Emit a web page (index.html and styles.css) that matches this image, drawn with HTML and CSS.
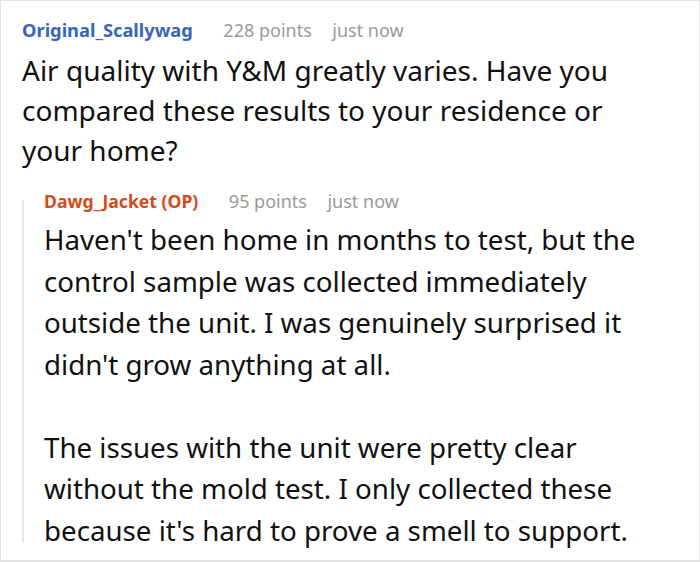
FILE: index.html
```html
<!DOCTYPE html>
<html>
<head>
<meta charset="utf-8">
<link rel="stylesheet" href="styles.css">
</head>
<body>
<div class="thread">
  <div class="comment">
    <div class="meta">
      <span class="author">Original_Scallywag</span>
      <span class="points">228 points</span>
      <span class="time">just now</span>
    </div>
    <p class="body">Air quality with Y&amp;M greatly varies. Have you compared these results to your residence or your home?</p>
    <div class="reply">
      <div class="meta">
        <span class="author op">Dawg_Jacket (OP)</span>
        <span class="points">95 points</span>
        <span class="time">just now</span>
      </div>
      <p class="body reply-body">Haven't been home in months to test, but the control sample was collected immediately outside the unit. I was genuinely surprised it didn't grow anything at all.</p>
      <p class="body reply-body">The issues with the unit were pretty clear without the mold test. I only collected these because it's hard to prove a smell to support.</p>
    </div>
  </div>
</div>
</body>
</html>
```

FILE: styles.css
```css
html, body {
  margin: 0;
  padding: 0;
  background: #fff;
}
.thread {
  box-sizing: border-box;
  width: 700px;
  height: 562px;
  border: 1px solid #e2e2e2;
  border-bottom-width: 2px;
  overflow: hidden;
  font-family: "Noto Sans", "Open Sans", sans-serif;
  color: #111;
}
.comment {
  padding: 17px 0 0 21px;
}
.meta {
  display: flex;
  gap: 30.5px;
  font-size: 18px;
  line-height: 24px;
  color: #9a9a9a;
}
.meta .time { margin-left: -10px; }
.author {
  font-weight: 700;
  font-size: 18.3px;
  color: #3767b3;
}
.author.op {
  font-size: 17.6px;
  color: #d44a1a;
}
.body {
  margin: 8px 0 0;
  max-width: 615px;
  font-size: 28px;
  line-height: 40px;
}
.reply {
  position: relative;
  margin-top: 19px;
  padding-left: 22px;
}
.reply::before {
  content: "";
  position: absolute;
  left: 0;
  top: 11px;
  bottom: 9px;
  width: 2px;
  background: #e6e6e6;
}
.reply-body {
  margin-top: 6px;
  max-width: 625px;
  font-size: 27.7px;
  line-height: 41.5px;
}
.reply-body + .reply-body {
  margin-top: 41.5px;
}
```
